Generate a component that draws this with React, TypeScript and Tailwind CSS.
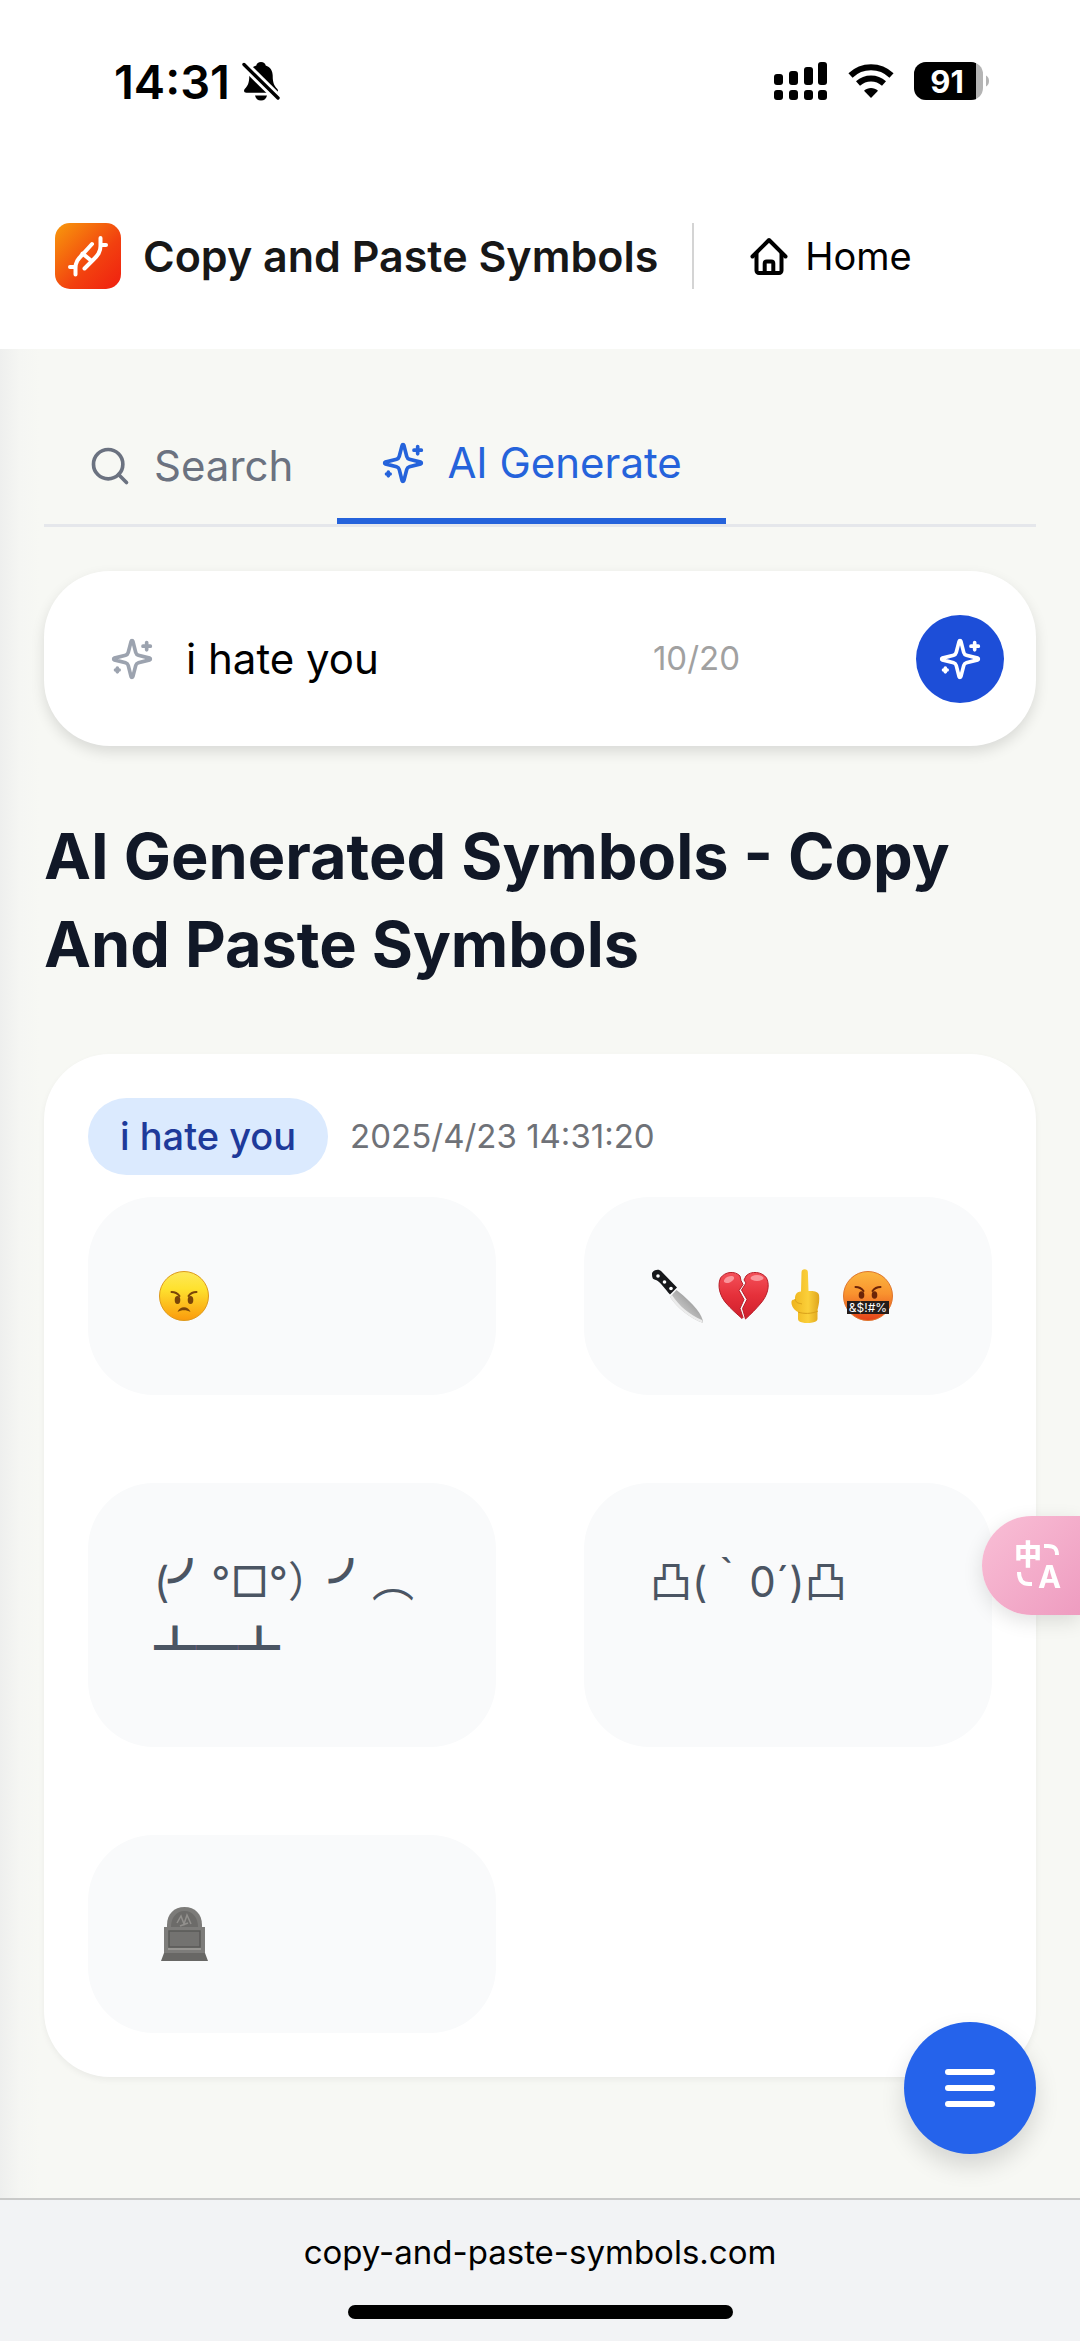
import React, { useState } from 'react';
import { Search } from 'lucide-react';

interface IconProps {
  className?: string;
}

const SparklesIcon: React.FC<IconProps> = ({ className }) => (
  <svg
    className={className}
    viewBox="0 0 24 24"
    fill="none"
    stroke="currentColor"
    strokeWidth={2}
    strokeLinecap="round"
    strokeLinejoin="round"
    aria-hidden="true"
  >
    <path d="M9.937 15.5A2 2 0 0 0 8.5 14.063l-6.135-1.582a.5.5 0 0 1 0-.962L8.5 9.936A2 2 0 0 0 9.937 8.5l1.582-6.135a.5.5 0 0 1 .963 0L14.063 8.5A2 2 0 0 0 15.5 9.937l6.135 1.581a.5.5 0 0 1 0 .964L15.5 14.063a2 2 0 0 0-1.437 1.437l-1.582 6.135a.5.5 0 0 1-.963 0z" />
    <path d="M20 3v4M22 5h-4M4 17v2M5 18H3" />
  </svg>
);

const StatusBar = () => (
  <div className="flex h-[162px] items-center justify-between pl-[114px] pr-[90px] text-black">
    <div className="flex items-center gap-3">
      <span className="text-[47px] font-semibold leading-none">14:31</span>
      <svg className="h-10 w-[38px]" viewBox="0 0 38 40" aria-hidden="true">
        <path
          d="M19 1c2.6 0 4.300 1.400 4.700 3.400 4.600 1.600 7 5.200 7 10.200 0 7.600 1.600 10.400 4.400 13.200 1.600 1.800 1 4-1.600 4H4.500c-2.600 0-3.200-2.200-1.600-4 2.800-2.800 4.400-5.600 4.400-13.200 0-5 2.400-8.600 7-10.200C14.700 2.400 16.400 1 19 1z"
          fill="currentColor"
        />
        <path d="M13 34.500h12c-.6 3-2.800 5-6 5s-5.400-2-6-5z" fill="currentColor" />
        <path d="M0 1.500 38 39" stroke="#fff" strokeWidth="9" />
        <path d="M2 3.500 36 37" stroke="currentColor" strokeWidth="3.400" strokeLinecap="round" />
      </svg>
    </div>
    <div className="flex items-center gap-5">
      <svg className="h-[38px] w-[54px]" viewBox="0 0 54 38" fill="currentColor" aria-hidden="true">
        <rect x="0" y="12" width="9" height="11" rx="3" />
        <rect x="15" y="9" width="9" height="14" rx="3" />
        <rect x="30" y="5" width="9" height="18" rx="3" />
        <rect x="44" y="0" width="9" height="23" rx="3" />
        <rect x="0" y="28" width="9" height="10" rx="3" />
        <rect x="15" y="28" width="9" height="10" rx="3" />
        <rect x="30" y="28" width="9" height="10" rx="3" />
        <rect x="44" y="28" width="9" height="10" rx="3" />
      </svg>
      <svg className="h-[36px] w-[46px]" viewBox="0 0 46 36" fill="none" stroke="currentColor" aria-hidden="true">
        <path d="M2.500 12.500C14 1.500 32 1.500 43.500 12.500" strokeWidth="6" />
        <path d="M10 20.500c7.500-6.700 18.500-6.700 26 0" strokeWidth="6" />
        <path d="M23 35l-7-7.200c4-3.600 10-3.600 14 0z" fill="currentColor" stroke="none" />
      </svg>
      <svg className="h-[38px] w-[76px]" viewBox="0 0 76 38" aria-hidden="true">
        <clipPath id="battery">
          <rect width="69" height="38" rx="12" />
        </clipPath>
        <g clipPath="url(#battery)">
          <rect width="69" height="38" fill="#b4b4b4" />
          <rect width="62" height="38" fill="#000" />
        </g>
        <path d="M72 13.500c4 2 4 9 0 11z" fill="#b4b4b4" />
        <text
          x="33"
          y="30.500"
          textAnchor="middle"
          fontFamily="Inter, sans-serif"
          fontSize="31"
          fontWeight="700"
          fill="#fff"
        >
          91
        </text>
      </svg>
    </div>
  </div>
);

const Header = () => (
  <header className="flex h-[187px] items-center px-[55px]">
    <a href="#top" className="flex items-center gap-[22px]">
      <svg className="h-[66px] w-[66px]" viewBox="0 0 66 66" fill="none" aria-hidden="true">
        <defs>
          <linearGradient id="logo" x1="0" y1="0" x2="1" y2="1">
            <stop offset="0" stopColor="#f89a0c" />
            <stop offset="0.6" stopColor="#f2400f" />
            <stop offset="1" stopColor="#f01f10" />
          </linearGradient>
        </defs>
        <rect width="66" height="66" rx="15" fill="url(#logo)" />
        <g stroke="#fff" strokeWidth="4" strokeLinecap="round" strokeLinejoin="round">
          <path d="M20.500 51.500V45c0-6 2.500-9 6.500-13l10-11" />
          <path d="M15 44h5M27.500 30.500 36 37.500" />
          <path d="M29.500 45.500 38 37c5-5 7.500-8 7.500-14v-8" />
          <path d="M46 22h5" />
        </g>
      </svg>
      <span className="text-[43px] font-semibold leading-[66px] text-neutral-900">Copy and Paste Symbols</span>
    </a>
    <div className="ml-[34px] h-[66px] w-[2px] bg-neutral-300" />
    <nav className="ml-[55px]">
      <a href="#home" className="flex items-center gap-4 text-[38px] leading-[66px] text-black">
        <svg
          className="h-10 w-10"
          viewBox="0 0 40 40"
          fill="none"
          stroke="currentColor"
          strokeWidth="4"
          strokeLinecap="round"
          strokeLinejoin="round"
          aria-hidden="true"
        >
          <path d="M3.500 20.500 20 4l16.500 16.500" />
          <path d="M7.500 17.500V34.500a2.500 2.500 0 0 0 2.500 2.500h20a2.500 2.500 0 0 0 2.500-2.500V17.500" />
          <path d="M15.700 37V27.500a2 2 0 0 1 2-2h4.600a2 2 0 0 1 2 2V37" />
        </svg>
        Home
      </a>
    </nav>
  </header>
);

const AngryFace = () => (
  <svg className="h-[52px] w-[52px]" viewBox="0 0 52 52" role="img" aria-label="angry face">
    <defs>
      <linearGradient id="yellow" x1="0" y1="0" x2="0" y2="1">
        <stop offset="0" stopColor="#fde85a" />
        <stop offset="0.350" stopColor="#fee22f" />
        <stop offset="1" stopColor="#fb9a0c" />
      </linearGradient>
    </defs>
    <circle cx="26" cy="26" r="24.500" fill="url(#yellow)" stroke="#dd9a1c" strokeWidth="1" />
    <g fill="none" stroke="#7a4508" strokeWidth="2" strokeLinecap="round">
      <path d="M13.500 22c3 0 6 1.200 8 4M38.500 22c-3 0-6 1.200-8 4" />
    </g>
    <ellipse cx="19.500" cy="30" rx="2.800" ry="4" fill="#7a4508" />
    <ellipse cx="32.500" cy="30" rx="2.800" ry="4" fill="#7a4508" />
    <path d="M19.500 42c2-6.500 11-6.500 13 0-4-2.400-9-2.400-13 0z" fill="#7a4508" />
  </svg>
);

const Knife = () => (
  <svg className="h-[56px] w-[56px]" viewBox="0 0 56 56" role="img" aria-label="knife">
    <defs>
      <linearGradient id="blade" x1="0" y1="1" x2="1" y2="0">
        <stop offset="0" stopColor="#f1f1f1" />
        <stop offset="0.500" stopColor="#b5b5b5" />
        <stop offset="1" stopColor="#777" />
      </linearGradient>
    </defs>
    <path d="M2 5c2-3.500 7-4.500 9.500-1.500L27 19.500 20 26.500C15 21 11 14.500 6 12c-3-1-4-1-4-7z" fill="#17181b" />
    <path d="M26.500 22 20 29c7 11 20 21 33 26 0-8-9-19-26.500-33z" fill="url(#blade)" />
    <path d="M20 29c7 11 20 21 33 26l-1-3C40 47 29 38 22 27z" fill="#ececec" />
    <g fill="#fff">
      <circle cx="8" cy="8" r="1.800" />
      <circle cx="14.500" cy="14" r="1.800" />
      <circle cx="21" cy="20.500" r="1.800" />
    </g>
  </svg>
);

const BrokenHeart = () => (
  <svg className="h-[52px] w-[52px]" viewBox="0 0 52 52" role="img" aria-label="broken heart">
    <defs>
      <linearGradient id="heart" x1="0" y1="0" x2="0" y2="1">
        <stop offset="0" stopColor="#f4515a" />
        <stop offset="0.500" stopColor="#e5303a" />
        <stop offset="1" stopColor="#cf1f2c" />
      </linearGradient>
    </defs>
    <path
      d="M22 6C17 .5 7 1.500 2.500 8-1 16 2 26 8 33c5 6 11 11 16 15.500l1-1-3-9 4-9-5-9 4-6-2-4z"
      fill="url(#heart)"
      stroke="#b71f2a"
      strokeWidth="1"
    />
    <path
      d="M28 6c5-5.500 16-4.500 20.500 2 4 8 .5 18-5.500 25-5 6-10 11-15.500 16l-3-10.500 4.500-9-5.500-9.500 4.500-7-2-3z"
      fill="url(#heart)"
      stroke="#b71f2a"
      strokeWidth="1"
    />
    <ellipse cx="11" cy="9.500" rx="5.500" ry="3" fill="#ffb7ba" opacity=".7" transform="rotate(-25 11 9.500)" />
    <ellipse cx="39" cy="8" rx="6.500" ry="3" fill="#ffb7ba" opacity=".7" />
  </svg>
);

const MiddleFinger = () => (
  <svg className="h-[56px] w-[32px]" viewBox="0 0 32 56" role="img" aria-label="middle finger">
    <defs>
      <linearGradient id="hand" x1="0" y1="0" x2="1" y2="0">
        <stop offset="0" stopColor="#eeb31c" />
        <stop offset="0.600" stopColor="#fbd03a" />
        <stop offset="1" stopColor="#dfa51d" />
      </linearGradient>
    </defs>
    <path
      d="M11.500 4.500a3.200 3.200 0 0 1 6.400 0L18.500 23c5-.5 10 .5 10.500 4 .8 6-.5 11-1.500 15v9c0 2-2 3-5 3.500-4 .7-7 .7-10 0-3-.5-4.500-1.500-4.500-3.500v-7C4 42 1 37.500 1.500 33.500 2 31 5 32 5 31c0-4 1-7 6-7.500z"
      fill="url(#hand)"
    />
    <path d="M5 31c1 5 5 4 7 5M8 44c5 2 14 2 20-1" fill="none" stroke="#d9a01a" strokeWidth="1" />
  </svg>
);

const CursingFace = () => (
  <svg className="h-[52px] w-[52px]" viewBox="0 0 52 52" role="img" aria-label="cursing face">
    <defs>
      <linearGradient id="rage" x1="0" y1="0" x2="0" y2="1">
        <stop offset="0" stopColor="#fbb63f" />
        <stop offset="0.450" stopColor="#f9932f" />
        <stop offset="1" stopColor="#e4421a" />
      </linearGradient>
    </defs>
    <circle cx="26" cy="26" r="24.500" fill="url(#rage)" stroke="#df762e" strokeWidth="1" />
    <path
      d="M13.500 17c3 0 6 1.200 8 4M38.500 17c-3 0-6 1.200-8 4"
      fill="none"
      stroke="#6b2408"
      strokeWidth="2"
      strokeLinecap="round"
    />
    <ellipse cx="19.500" cy="25" rx="2.800" ry="3.800" fill="#6b2408" />
    <ellipse cx="32.500" cy="25" rx="2.800" ry="3.800" fill="#6b2408" />
    <rect x="5" y="31" width="42" height="13" fill="#251c1a" />
    <text x="26" y="42" textAnchor="middle" fontFamily="Inter, sans-serif" fontSize="12" fill="#fff">
      &amp;$!#%
    </text>
  </svg>
);

const Headstone = () => (
  <svg className="h-[56px] w-[52px]" viewBox="0 0 52 56" role="img" aria-label="headstone">
    <path d="M9 22V19C9 8 16 1 26.500 1S44 8 44 19v3z" fill="#7c7b79" />
    <path d="M13 21c0-9 5-16 13.500-16S40 12 40 21z" fill="#6c6b69" />
    <path d="m19 17 4-7 3 8 3-9 4 9M22 20l8-3" fill="none" stroke="#92908d" strokeWidth="1.500" />
    <rect x="6" y="21" width="41" height="26" fill="#7d7c7a" />
    <rect x="11" y="25" width="31" height="16" fill="#737270" stroke="#5a5957" strokeWidth="1.500" />
    <path d="M10 43h33" stroke="#a09e9b" strokeWidth="1.500" />
    <path d="M6 47h41l3 8H3z" fill="#686765" />
  </svg>
);

// the light arc is too faint next to the rest of the kaomoji
const Arm = () => <span className="[-webkit-text-stroke:3px_#4b5563]">╯</span>;

const results: { id: string; content: React.ReactNode }[] = [
  { id: 'angry', content: <span className="px-1"><AngryFace /></span> },
  {
    id: 'knife',
    content: (
      <span className="flex items-center gap-3">
        <Knife />
        <BrokenHeart />
        <span className="px-2">
          <MiddleFinger />
        </span>
        <CursingFace />
      </span>
    ),
  },
  {
    id: 'flip',
    content: (
      <span>
        (<Arm />°□°）<Arm />︵ ┻━┻
      </span>
    ),
  },
  { id: 'rude', content: '凸(｀0´)凸' },
  { id: 'grave', content: <span className="px-1"><Headstone /></span> },
];

export default function App() {
  const [prompt, setPrompt] = useState('i hate you');

  return (
    <div
      id="top"
      className="flex min-h-screen flex-col bg-white"
      style={{ fontFamily: 'Inter, "Noto Sans CJK JP", sans-serif' }}
    >
      <StatusBar />
      <Header />

      <main className="flex-1 bg-[#f7f8f4] bg-[linear-gradient(to_right,#eeefee,#f5f6f3_20px,#f7f8f4_40px)] px-11 pt-[59px]">
        <div role="tablist" className="flex border-b-[3px] border-[#e5e7eb]">
          <button
            type="button"
            role="tab"
            aria-selected="false"
            className="flex items-center gap-[22px] px-11 text-[42px] leading-[66px] text-[#6b7280]"
          >
            <Search className="h-11 w-11" />
            Search
          </button>
          <button
            type="button"
            role="tab"
            aria-selected="true"
            className="flex items-center gap-[22px] border-b-[6px] border-[#2563db] px-11 py-[22px] text-[42px] leading-[66px] text-[#2563db]"
          >
            <SparklesIcon className="h-11 w-11" />
            AI Generate
          </button>
        </div>

        <form
          onSubmit={(e) => e.preventDefault()}
          className="mt-11 flex h-[175px] items-center rounded-[66px] bg-white pl-[66px] pr-8 shadow-[0_6px_14px_rgba(0,0,0,0.12)]"
        >
          <SparklesIcon className="h-11 w-11 shrink-0 text-[#9ca3af]" />
          <input
            type="text"
            aria-label="Describe the symbols"
            maxLength={20}
            value={prompt}
            onChange={(e) => setPrompt(e.target.value)}
            className="ml-8 min-w-0 flex-1 bg-transparent text-[42px] leading-[66px] text-black outline-none"
          />
          <span className="mr-[176px] text-[33px] text-neutral-400">{prompt.length}/20</span>
          <button
            type="submit"
            aria-label="Generate"
            className="flex h-[88px] w-[88px] items-center justify-center rounded-full bg-[#1d4ed8] text-white"
          >
            <SparklesIcon className="h-11 w-11" />
          </button>
        </form>

        <h1 className="mt-[66px] text-[63px] font-bold leading-[88px] text-[#111827]">
          AI Generated Symbols - Copy And Paste Symbols
        </h1>

        <section className="mt-[66px] rounded-[66px] bg-white p-11 shadow-[0_3px_6px_rgba(0,0,0,0.05)]">
          <div className="flex items-center gap-[22px]">
            <span className="rounded-full bg-[#dbeafe] px-8 text-[38px] font-medium leading-[77px] text-[#1e3a9a]">
              i hate you
            </span>
            <time className="text-[33px] text-[#6f7278]">2025/4/23 14:31:20</time>
          </div>
          <div className="mt-[22px] grid grid-cols-2 gap-[88px]">
            {results.map((result) => (
              <button
                key={result.id}
                type="button"
                className="flex items-start rounded-[66px] bg-[#f9fafb] p-[66px] text-left text-[42px] leading-[66px] text-[#4b5563]"
              >
                <span className="flex min-h-[66px] items-center">{result.content}</span>
              </button>
            ))}
          </div>
        </section>
      </main>

      <footer className="flex h-[143px] flex-col items-center justify-between border-t-2 border-[#c9cac9] bg-[#f2f3f5] pb-[22px] pt-7">
        <span className="text-[33px] leading-[48px] text-black">copy-and-paste-symbols.com</span>
        <div className="h-[14px] w-[385px] rounded-full bg-black" />
      </footer>

      <button
        type="button"
        aria-label="Translate"
        className="fixed bottom-[726px] right-0 flex h-[99px] w-[98px] items-center rounded-l-full bg-gradient-to-br from-[#f9bfd6] to-[#ee9cc0] pl-8 shadow-[0_6px_20px_rgba(0,0,0,0.12)]"
      >
        <svg
          className="h-12 w-12 overflow-visible"
          viewBox="0 0 48 48"
          fill="none"
          stroke="#fff"
          strokeWidth="4"
          aria-hidden="true"
        >
          <text
            x="0"
            y="23"
            fontFamily="Noto Sans CJK SC, sans-serif"
            fontWeight="900"
            fontSize="28"
            fill="#fff"
            stroke="none"
          >
            中
          </text>
          <text x="24" y="46" fontFamily="Inter, sans-serif" fontWeight="700" fontSize="31" fill="#fff" stroke="none">
            A
          </text>
          <path d="M30 4h4c7 0 9 3 9 9M5 30c0 9 4 12 10 12h3" />
        </svg>
      </button>

      <button
        type="button"
        aria-label="Menu"
        className="fixed bottom-[187px] right-11 flex h-[132px] w-[132px] flex-col items-center justify-center gap-[10px] rounded-full bg-[#2563eb] shadow-[0_12px_24px_rgba(0,0,0,0.14)]"
      >
        <span className="h-[6px] w-[50px] rounded-full bg-white" />
        <span className="h-[6px] w-[50px] rounded-full bg-white" />
        <span className="h-[6px] w-[50px] rounded-full bg-white" />
      </button>
    </div>
  );
}
